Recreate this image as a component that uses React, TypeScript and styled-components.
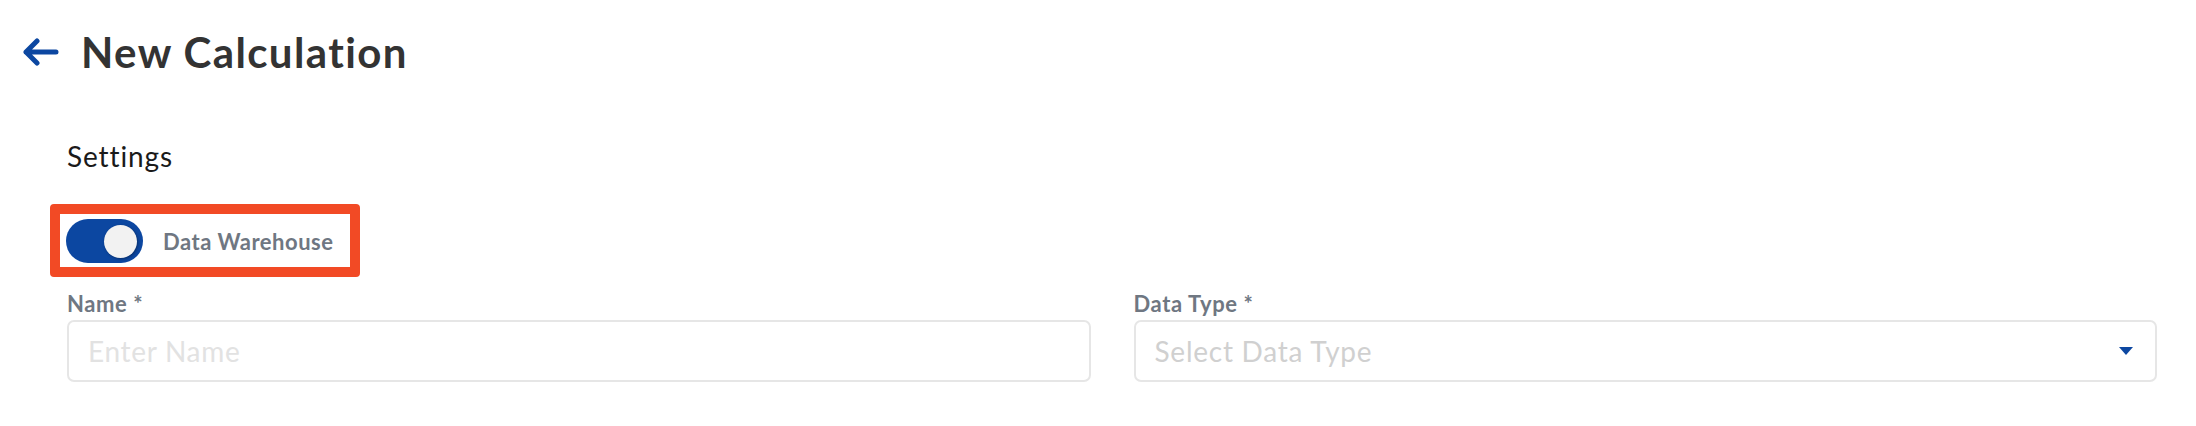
import React, { useState } from 'react';
import styled, { createGlobalStyle } from 'styled-components';

const colors = {
  title: '#333333',
  blue: '#0c47a1',
  label: '#6f7782',
  border: '#e6e6e6',
  placeholder: '#d0d0d0',
  highlight: '#f24a25',
};

const GlobalStyle = createGlobalStyle`
  body {
    margin: 0;
    background: #ffffff;
    font-family: Lato, "Noto Sans", sans-serif;
  }
`;

const BackArrow = () => (
  <svg width="37" height="28" viewBox="0 0 37 28" fill="none">
    <path
      d="M34 14H4M15 3L4 14l11 11"
      stroke={colors.blue}
      strokeWidth="5"
      strokeLinecap="round"
      strokeLinejoin="round"
    />
  </svg>
);

const Caret = () => (
  <svg width="14" height="8" viewBox="0 0 14 8">
    <path d="M0 0h14L7 8z" fill={colors.blue} />
  </svg>
);

export default function App() {
  const [warehouse, setWarehouse] = useState(true);

  return (
    <Page>
      <GlobalStyle />
      <Header>
        <BackButton aria-label="Back">
          <BackArrow />
        </BackButton>
        <Title>New Calculation</Title>
      </Header>

      <Form>
        <SectionTitle>Settings</SectionTitle>

        <ToggleRow>
          <Switch $on={warehouse} onClick={() => setWarehouse(!warehouse)}>
            <Knob $on={warehouse} />
          </Switch>
          <ToggleLabel>Data Warehouse</ToggleLabel>
        </ToggleRow>

        <Fields>
          <Field>
            <Label>Name *</Label>
            <Input placeholder="Enter Name" />
          </Field>
          <Field>
            <Label>Data Type *</Label>
            <Select>
              <Placeholder>Select Data Type</Placeholder>
              <Caret />
            </Select>
          </Field>
        </Fields>
      </Form>
    </Page>
  );
}

const Page = styled.div`
  padding: 28px 39px 0 22px;
`;

const Header = styled.div`
  display: flex;
  align-items: center;
  gap: 22px;
`;

const BackButton = styled.button`
  display: flex;
  padding: 0;
  border: none;
  background: none;
  cursor: pointer;
`;

const Title = styled.h1`
  margin: 0;
  font-size: 42px;
  line-height: 48px;
  font-weight: 700;
  letter-spacing: 1.4px;
  color: ${colors.title};
`;

const Form = styled.div`
  padding-left: 45px;
`;

const SectionTitle = styled.div`
  margin-top: 62px;
  font-size: 28px;
  line-height: 36px;
  letter-spacing: 0.9px;
  color: #1a1a1a;
`;

const ToggleRow = styled.div`
  display: inline-flex;
  align-items: center;
  gap: 20px;
  margin: 30px 0 0 -17px;
  padding: 5px 17px 4px 6px;
  border: 10px solid ${colors.highlight};
  border-radius: 4px;
`;

const Switch = styled.button<{ $on: boolean }>`
  position: relative;
  width: 77px;
  height: 44px;
  padding: 0;
  border: none;
  border-radius: 22px;
  background: ${(p) => (p.$on ? colors.blue : '#c4c4c4')};
  cursor: pointer;
`;

const Knob = styled.span<{ $on: boolean }>`
  position: absolute;
  top: 5.5px;
  left: ${(p) => (p.$on ? '38px' : '6px')};
  width: 33px;
  height: 33px;
  border-radius: 50%;
  background: #f2f2f2;
  box-shadow: 1px 1px 3px rgba(0, 0, 0, 0.35);
`;

const ToggleLabel = styled.span`
  font-size: 22px;
  font-weight: 700;
  letter-spacing: 0.5px;
  color: ${colors.label};
`;

const Fields = styled.div`
  display: grid;
  grid-template-columns: 1fr 1fr;
  column-gap: 43px;
  margin-top: 14px;
`;

const Field = styled.div`
  display: flex;
  flex-direction: column;
  gap: 3px;
`;

const Label = styled.label`
  font-size: 22px;
  line-height: 26px;
  font-weight: 700;
  letter-spacing: 0.6px;
  color: ${colors.label};
`;

const Input = styled.input`
  box-sizing: border-box;
  height: 62px;
  padding: 0 19px;
  border: 2px solid ${colors.border};
  border-radius: 7px;
  font-family: inherit;
  font-size: 28px;
  letter-spacing: 0.7px;
  color: #333;
  outline: none;

  &::placeholder {
    color: #e2e2e2;
  }
`;

const Select = styled.div`
  box-sizing: border-box;
  display: flex;
  align-items: center;
  justify-content: space-between;
  height: 62px;
  padding: 0 22px 0 19px;
  border: 2px solid ${colors.border};
  border-radius: 7px;
`;

const Placeholder = styled.span`
  font-size: 28px;
  letter-spacing: 0.75px;
  color: ${colors.placeholder};
`;
